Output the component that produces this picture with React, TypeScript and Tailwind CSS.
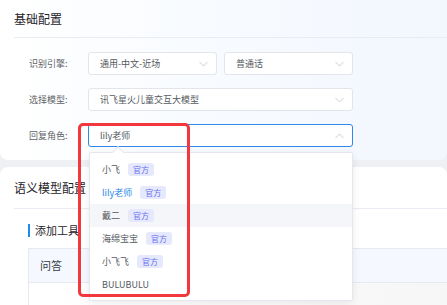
import React from "react";

const FONT = { fontFamily: '"Noto Sans CJK SC", "Noto Sans", sans-serif' };

function Chevron({ up = false }: { up?: boolean }) {
  return (
    <svg width="9" height="6" viewBox="0 0 9 6" className="shrink-0">
      <path
        d={up ? "M0.5 5 L4.5 1 L8.5 5" : "M0.5 1 L4.5 5 L8.5 1"}
        fill="none"
        stroke="#c8ccd3"
        strokeWidth="1"
      />
    </svg>
  );
}

interface SelectProps {
  value: string;
  width: string;
  focused?: boolean;
}

function Select({ value, width, focused }: SelectProps) {
  return (
    <div
      className={`${width} h-[23px] flex items-center justify-between pl-[11px] pr-[8px] bg-white rounded-[3px] border ${
        focused ? "border-[#2f88ea]" : "border-[#e2e5ea]"
      }`}
    >
      <span className="text-[9px] text-[#555a61] leading-none">{value}</span>
      <Chevron up={focused} />
    </div>
  );
}

function FormRow({ label, children }: { label: string; children: React.ReactNode }) {
  return (
    <div className="flex items-center">
      <div className="w-[59px] text-[9px] text-[#5f6368] leading-none">{label}</div>
      <div className="flex gap-[7px]">{children}</div>
    </div>
  );
}

const roles = [
  { name: "小飞", official: true },
  { name: "lily老师", official: true, selected: true },
  { name: "戴二", official: true, hover: true },
  { name: "海绵宝宝", official: true },
  { name: "小飞飞", official: true },
  { name: "BULUBULU", official: false },
];

function RoleDropdown() {
  return (
    <div className="absolute left-[89px] top-[152px] w-[264px] bg-white border border-[#e4e7ed] rounded-[2px] shadow-[0_2px_8px_rgba(0,0,0,0.08)] pt-[5px] pb-[4px]">
      {/* little arrow */}
      <div className="absolute -top-[5px] left-[24px] w-[8px] h-[8px] rotate-45 bg-white border-l border-t border-[#e4e7ed]" />
      {roles.map((r) => (
        <div
          key={r.name}
          className={`relative h-[23px] flex items-center pl-[12px] gap-[8px] ${r.hover ? "bg-[#f5f6fa]" : ""}`}
        >
          <span
            className={`text-[9px] leading-none ${
              r.selected ? "text-[#2f88ea]" : "text-[#555a61]"
            }`}
          >
            {r.name}
          </span>
          {r.official && (
            <span className="h-[13px] px-[5px] flex items-center rounded-[3px] bg-[#e6e8fd] text-[8px] text-[#6670ee] leading-none">
              官方
            </span>
          )}
        </div>
      ))}
    </div>
  );
}

export default function App() {
  return (
    <div className="relative w-[447px] h-[305px] overflow-hidden bg-[#eff0f3]" style={FONT}>
      {/* 基础配置 */}
      <div className="h-[160px] rounded-b-[8px] bg-[linear-gradient(90deg,#ffffff_0%,#f8fbff_45%,#f2f7fe_100%)]">
        <div className="ml-[14px] h-[38px] flex items-center border-b border-[#e9edf3]">
          <span className="text-[12px] text-[#1f2329] leading-none">基础配置</span>
        </div>
        <div className="pl-[29px] pt-[14px] flex flex-col gap-[13px]">
          <FormRow label="识别引擎:">
            <Select value="通用-中文-近场" width="w-[129px]" />
            <Select value="普通话" width="w-[129px]" />
          </FormRow>
          <FormRow label="选择模型:">
            <Select value="讯飞星火儿童交互大模型" width="w-[265px]" />
          </FormRow>
          <FormRow label="回复角色:">
            <Select value="lily老师" width="w-[265px]" focused />
          </FormRow>
        </div>
      </div>

      {/* 语义模型配置 */}
      <div className="mt-[7px] h-[200px] rounded-t-[8px] bg-white">
        <div className="ml-[14px] h-[42px] flex items-center border-b border-[#e9edf3]">
          <span className="text-[12px] text-[#1f2329] leading-none">语义模型配置</span>
        </div>
        <div className="pl-[28px] pt-[14px]">
          <div className="flex items-center gap-[5px] h-[14px]">
            <div className="w-[2px] h-[13px] bg-[#1f8bf0]" />
            <span className="text-[11px] text-[#1f2329] leading-none">添加工具</span>
          </div>
          <div className="mt-[11px] border-l border-t border-[#e6e9f0]">
            <div className="h-[34px] flex items-center pl-[11px] bg-[#f5f9ff] border-b border-[#e6e9f0]">
              <span className="text-[11px] text-[#333840] leading-none">问答</span>
            </div>
            <div className="h-[40px] pl-[12px] pt-[14px] bg-[linear-gradient(90deg,#ffffff_0%,#fafafa_60%,#f6f6f6_100%)]">
              <span className="text-[9px] text-[#555a61] leading-none">延主配置问答</span>
            </div>
          </div>
        </div>
      </div>

      <RoleDropdown />

      {/* red annotation box */}
      <div className="absolute left-[78px] top-[123px] w-[112px] h-[174px] border-[3px] border-[#f2383d] rounded-[5px]" />
    </div>
  );
}
